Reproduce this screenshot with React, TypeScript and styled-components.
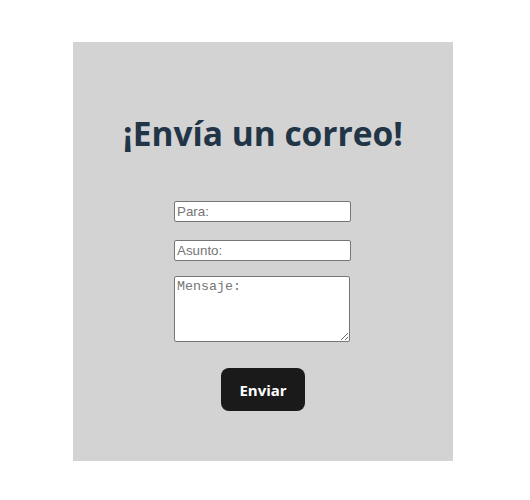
import React from "react";
import styled, { createGlobalStyle } from "styled-components";

const Global = createGlobalStyle`
  html, body { margin: 0; padding: 0; background: #ffffff; }
  body { font-family: "Open Sans", "Noto Sans", sans-serif; }
`;

const Page = styled.div`
  padding-top: 42px;
  padding-left: 73px;
`;

const Panel = styled.div`
  width: 380px;
  height: 419px;
  background: #d3d3d3;
  display: flex;
  flex-direction: column;
  align-items: center;
  box-sizing: border-box;
`;

const Title = styled.h1`
  margin: 69px 0 0 0;
  font-family: "Open Sans", "Noto Sans", sans-serif;
  font-weight: 700;
  font-size: 33.5px;
  line-height: 44px;
  color: #213547;
`;

const Form = styled.form`
  align-self: stretch;
  display: flex;
  flex-direction: column;
  align-items: flex-start;
  padding-left: 101px;
  margin-top: 46px;
`;

const Field = styled.input<{ $gap: number }>`
  box-sizing: border-box;
  width: 177px;
  height: 21px;
  margin: 0 0 ${(p) => p.$gap}px 0;
  padding: 1px 2px;
  font-family: "Liberation Sans", Arial, sans-serif;
  font-size: 13.33px;
  border: 1px solid #767676;
  border-radius: 2px;
  background: #fff;
  &::placeholder { color: #757575; }
`;

const Message = styled.textarea`
  box-sizing: border-box;
  width: 176px;
  height: 66px;
  margin: 0;
  padding: 2px;
  font-family: "Liberation Mono", "DejaVu Sans Mono", monospace;
  font-size: 13.33px;
  border: 1px solid #767676;
  border-radius: 2px;
  background: #fff;
  resize: both;
  &::placeholder { color: #757575; }
`;

const Send = styled.button`
  align-self: center;
  margin: 26px 0 0 -101px;
  width: 84px;
  height: 43px;
  border: none;
  border-radius: 8px;
  background: #1a1a1a;
  color: #ffffff;
  font-family: "Open Sans", "Noto Sans", sans-serif;
  font-weight: 700;
  font-size: 15px;
  cursor: pointer;
`;

export default function App() {
  return (
    <>
      <Global />
      <Page>
        <Panel>
          <Title>¡Envía un correo!</Title>
          <Form onSubmit={(e) => e.preventDefault()}>
            <Field $gap={18} type="text" placeholder="Para:" />
            <Field $gap={15} type="text" placeholder="Asunto:" />
            <Message placeholder="Mensaje:" />
            <Send type="submit">Enviar</Send>
          </Form>
        </Panel>
      </Page>
    </>
  );
}
